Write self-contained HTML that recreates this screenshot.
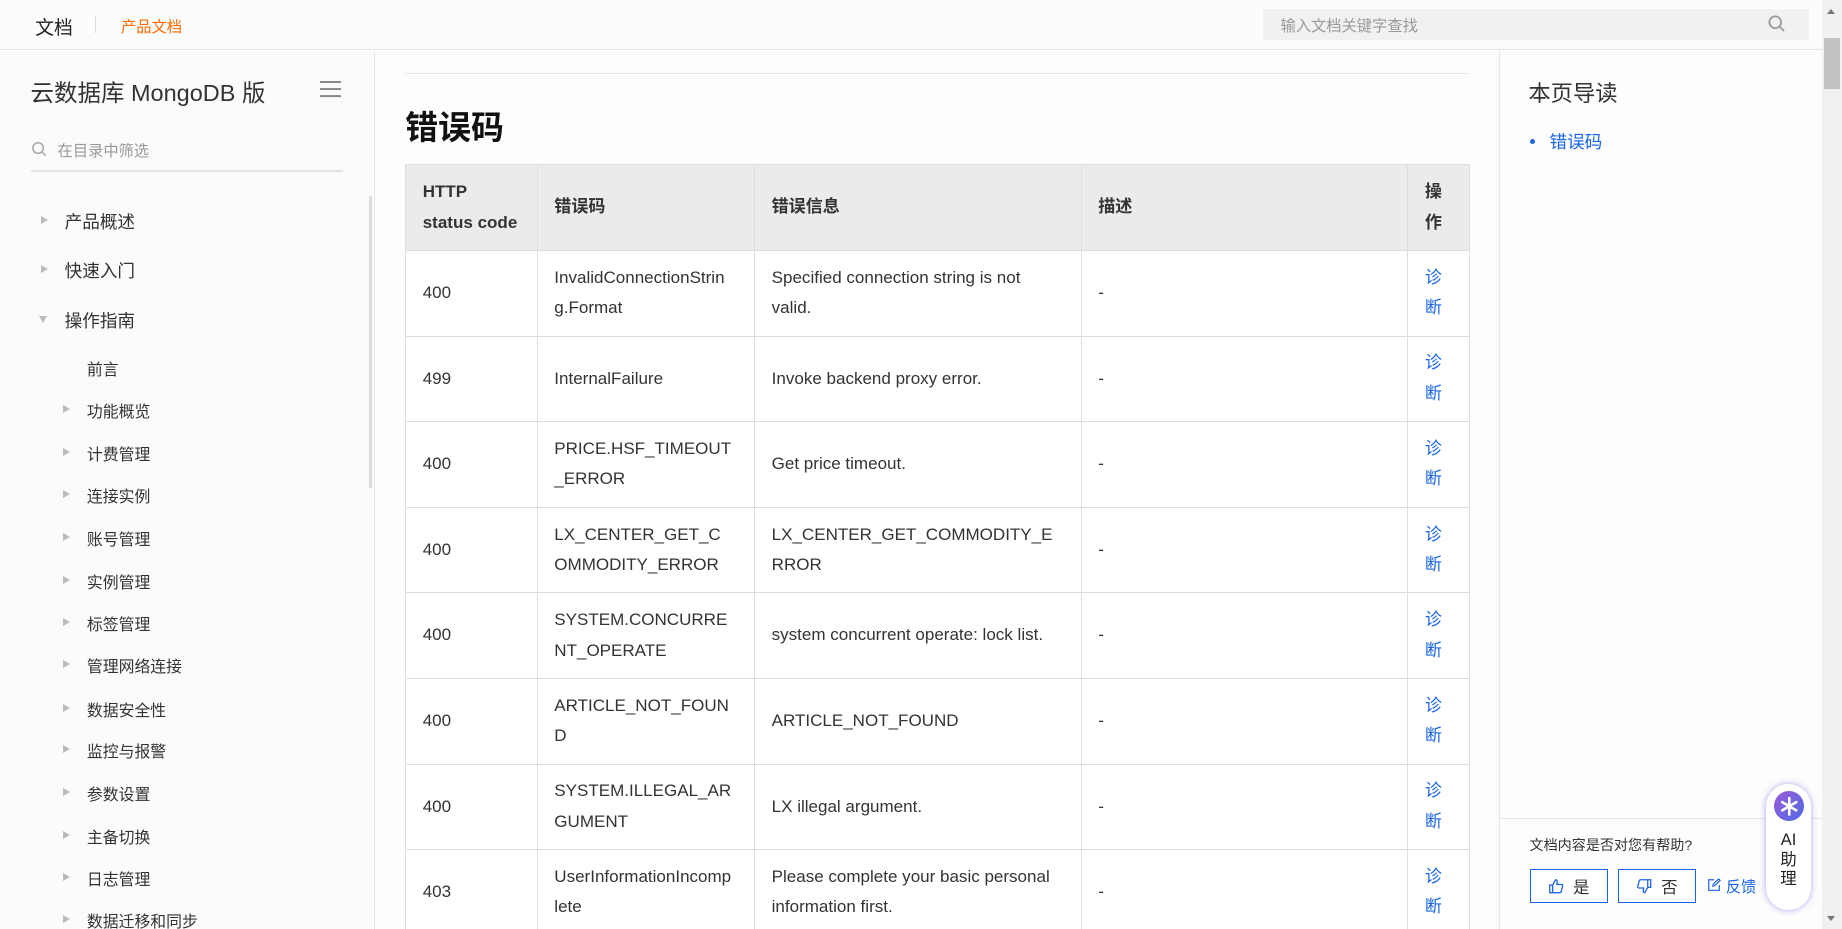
<!DOCTYPE html>
<html><head><meta charset="utf-8">
<style>
html,body{margin:0;padding:0;width:1842px;height:929px;overflow:hidden;background:#fdfdfd;}
#w{zoom:1.17474;width:1568px;height:791px;position:relative;font-family:"Liberation Sans","Noto Sans CJK SC",sans-serif;color:#333;overflow:hidden;background:#fdfdfd;}
.a{position:absolute;white-space:nowrap;}
.hdr{left:0;top:0;width:1551px;height:42px;border-bottom:1px solid #e3e3e3;background:#fcfcfc;}
.side{left:0;top:43px;width:318px;height:748px;border-right:1px solid #e6e6e6;background:#fbfbfb;}
.tri{width:0;height:0;border-top:4px solid transparent;border-bottom:4px solid transparent;border-left:6px solid #bbb;}
.tri.d{border-left:4px solid transparent;border-right:4px solid transparent;border-top:6px solid #bbb;border-bottom:0;}
table{border-collapse:collapse;font-size:14.5px;color:#333;background:#fff;}
td,th{border:1px solid #dedede;padding:0 14px;text-align:left;vertical-align:middle;line-height:26px;}
th{background:#ebebeb;font-weight:bold;height:72px;}
td{height:72px;}
td.b{color:#1a66e6;}
.btn{border:1px solid #1a66e6;height:29px;top:740px;font-size:14px;color:#333;display:flex;align-items:center;justify-content:center;box-sizing:border-box;background:#fff;}
</style></head><body><div id="w">
<div class="a hdr"></div>
<div class="a" style="left:30px;top:11px;font-size:16px;color:#222;">文档</div>
<div class="a" style="left:81px;top:14px;width:1px;height:14px;background:#ddd;"></div>
<div class="a" style="left:103px;top:13px;font-size:13px;color:#ff6a00;">产品文档</div>
<div class="a" style="left:1075px;top:8px;width:465px;height:26px;background:#f1f1f3;"></div>
<div class="a" style="left:1090px;top:12px;font-size:13px;color:#999;">输入文档关键字查找</div>
<svg class="a" style="left:1504px;top:12px" width="16" height="16" viewBox="0 0 16 16"><circle cx="7" cy="7" r="5" fill="none" stroke="#999" stroke-width="1.5"/><path d="M11 11l3.5 3.5" stroke="#999" stroke-width="1.5"/></svg>

<div class="a side"></div>
<div class="a" style="left:26px;top:63px;font-size:20px;color:#333;">云数据库 MongoDB 版</div>
<div class="a" style="left:272px;top:69px;width:18px;height:2px;background:#888;box-shadow:0 6px 0 #888,0 12px 0 #888;"></div>
<svg class="a" style="left:26px;top:120px" width="14" height="14" viewBox="0 0 14 14"><circle cx="6" cy="6" r="4.5" fill="none" stroke="#aaa" stroke-width="1.3"/><path d="M9.5 9.5l3 3" stroke="#aaa" stroke-width="1.3"/></svg>
<div class="a" style="left:49px;top:118px;font-size:13px;color:#999;">在目录中筛选</div>
<div class="a" style="left:26px;top:145px;width:266px;height:1px;background:#e3e3e3;"></div>
<div class="a" style="left:314px;top:167px;width:3px;height:248px;background:#ddd;"></div>

<div class="a tri" style="left:35px;top:184px"></div><div class="a" style="left:55px;top:178px;font-size:15px;">产品概述</div>
<div class="a tri" style="left:35px;top:226px"></div><div class="a" style="left:55px;top:220px;font-size:15px;">快速入门</div>
<div class="a tri d" style="left:33px;top:269px"></div><div class="a" style="left:55px;top:262px;font-size:15px;">操作指南</div>
<div class="a" style="left:74px;top:304px;font-size:13.5px;">前言</div>

<div class="a" style="left:345px;top:62px;width:905px;height:1px;background:#e6e6e6;"></div>
<div class="a" style="left:345px;top:87px;font-size:28px;font-weight:bold;color:#111;">错误码</div>
<table class="a" style="left:345px;top:140px;width:906px;">
<colgroup><col style="width:112px"><col style="width:185px"><col style="width:278px"><col style="width:278px"><col style="width:52px"></colgroup>
<tr><th>HTTP<br>status code</th><th>错误码</th><th>错误信息</th><th>描述</th><th>操<br>作</th></tr>
<tr><td>400</td><td>InvalidConnectionStrin<br>g.Format</td><td>Specified connection string is not<br>valid.</td><td>-</td><td class="b">诊<br>断</td></tr>
<tr><td>499</td><td>InternalFailure</td><td>Invoke backend proxy error.</td><td>-</td><td class="b">诊<br>断</td></tr>
<tr><td>400</td><td>PRICE.HSF_TIMEOUT<br>_ERROR</td><td>Get price timeout.</td><td>-</td><td class="b">诊<br>断</td></tr>
<tr><td>400</td><td>LX_CENTER_GET_C<br>OMMODITY_ERROR</td><td>LX_CENTER_GET_COMMODITY_E<br>RROR</td><td>-</td><td class="b">诊<br>断</td></tr>
<tr><td>400</td><td>SYSTEM.CONCURRE<br>NT_OPERATE</td><td>system concurrent operate: lock list.</td><td>-</td><td class="b">诊<br>断</td></tr>
<tr><td>400</td><td>ARTICLE_NOT_FOUN<br>D</td><td>ARTICLE_NOT_FOUND</td><td>-</td><td class="b">诊<br>断</td></tr>
<tr><td>400</td><td>SYSTEM.ILLEGAL_AR<br>GUMENT</td><td>LX illegal argument.</td><td>-</td><td class="b">诊<br>断</td></tr>
<tr><td>403</td><td>UserInformationIncomp<br>lete</td><td>Please complete your basic personal<br>information first.</td><td>-</td><td class="b">诊<br>断</td></tr>
</table>

<div class="a" style="left:1276px;top:43px;width:1px;height:748px;background:#e6e6e6;"></div>
<div class="a" style="left:1301px;top:65px;font-size:19px;color:#333;">本页导读</div>
<div class="a" style="left:1302px;top:118px;width:5px;height:5px;border-radius:50%;background:#1a66e6;"></div>
<div class="a" style="left:1319px;top:110px;font-size:15px;color:#1a66e6;">错误码</div>
<div class="a" style="left:1277px;top:696px;width:274px;height:1px;background:#e6e6e6;"></div>
<div class="a" style="left:1302px;top:711px;font-size:12px;color:#333;">文档内容是否对您有帮助?</div>
<div class="a btn" style="left:1302px;width:67px;"><svg width="14" height="14" viewBox="0 0 14 14" style="margin-right:7px"><path d="M1.5 6h2.5v6.5h-2.5zM4 6l2.5-4.5c1 0 1.5.7 1.3 1.7L7.5 5.5h4c.8 0 1.2.6 1 1.3l-1.2 4.7c-.2.6-.6 1-1.2 1H4" fill="none" stroke="#1a66e6" stroke-width="1.1"/></svg>是</div>
<div class="a btn" style="left:1377px;width:67px;"><svg width="14" height="14" viewBox="0 0 14 14" style="margin-right:7px"><g transform="rotate(180 7 7)"><path d="M1.5 6h2.5v6.5h-2.5zM4 6l2.5-4.5c1 0 1.5.7 1.3 1.7L7.5 5.5h4c.8 0 1.2.6 1 1.3l-1.2 4.7c-.2.6-.6 1-1.2 1H4" fill="none" stroke="#1a66e6" stroke-width="1.1"/></g></svg>否</div>
<svg class="a" style="left:1453px;top:747px" width="12" height="12" viewBox="0 0 12 12"><path d="M6 1.5H1.5v9h9V6M5 7l.3-1.8L10 .8l1.2 1.2L6.7 6.5z" fill="none" stroke="#1a66e6" stroke-width="1"/></svg>
<div class="a" style="left:1469px;top:745px;font-size:13px;color:#1a66e6;">反馈</div>
<div class="a" style="left:1503px;top:667px;width:39px;height:108px;border-radius:20px;background:#fff;box-shadow:0 0 6px rgba(120,110,230,.6);"></div>
<div class="a" style="left:1510px;top:673px;width:26px;height:26px;border-radius:50%;background:linear-gradient(135deg,#9a5bd8,#4f6be8);"></div>
<svg class="a" style="left:1510px;top:673px" width="26" height="26" viewBox="0 0 26 26"><path d="M13 6v14M7 9.5l12 7M7 16.5l12-7" stroke="#fff" stroke-width="2.2" stroke-linecap="round"/></svg>
<div class="a" style="left:1503px;top:707px;width:39px;text-align:center;font-size:14px;line-height:17px;color:#222;">AI<br>助<br>理</div>

<div class="a" style="left:1551px;top:0;width:17px;height:791px;background:#f1f1f1;"></div>
<div class="a" style="left:1553px;top:32px;width:13px;height:44px;background:#c1c1c1;"></div>
<div class="a" style="left:1555px;top:8px;width:0;height:0;border-left:4px solid transparent;border-right:4px solid transparent;border-bottom:5px solid #777;"></div>
<div class="a" style="left:1555px;top:780px;width:0;height:0;border-left:4px solid transparent;border-right:4px solid transparent;border-top:5px solid #777;"></div>

<div class="a tri" style="left:54px;top:345px"></div><div class="a" style="left:74px;top:340px;font-size:13.5px;">功能概览</div>
<div class="a tri" style="left:54px;top:381px"></div><div class="a" style="left:74px;top:376px;font-size:13.5px;">计费管理</div>
<div class="a tri" style="left:54px;top:417px"></div><div class="a" style="left:74px;top:412px;font-size:13.5px;">连接实例</div>
<div class="a tri" style="left:54px;top:454px"></div><div class="a" style="left:74px;top:449px;font-size:13.5px;">账号管理</div>
<div class="a tri" style="left:54px;top:490px"></div><div class="a" style="left:74px;top:485px;font-size:13.5px;">实例管理</div>
<div class="a tri" style="left:54px;top:526px"></div><div class="a" style="left:74px;top:521px;font-size:13.5px;">标签管理</div>
<div class="a tri" style="left:54px;top:562px"></div><div class="a" style="left:74px;top:557px;font-size:13.5px;">管理网络连接</div>
<div class="a tri" style="left:54px;top:599px"></div><div class="a" style="left:74px;top:594px;font-size:13.5px;">数据安全性</div>
<div class="a tri" style="left:54px;top:634px"></div><div class="a" style="left:74px;top:629px;font-size:13.5px;">监控与报警</div>
<div class="a tri" style="left:54px;top:671px"></div><div class="a" style="left:74px;top:666px;font-size:13.5px;">参数设置</div>
<div class="a tri" style="left:54px;top:707px"></div><div class="a" style="left:74px;top:702px;font-size:13.5px;">主备切换</div>
<div class="a tri" style="left:54px;top:743px"></div><div class="a" style="left:74px;top:738px;font-size:13.5px;">日志管理</div>
<div class="a tri" style="left:54px;top:779px"></div><div class="a" style="left:74px;top:774px;font-size:13.5px;">数据迁移和同步</div>
</div></body></html>
